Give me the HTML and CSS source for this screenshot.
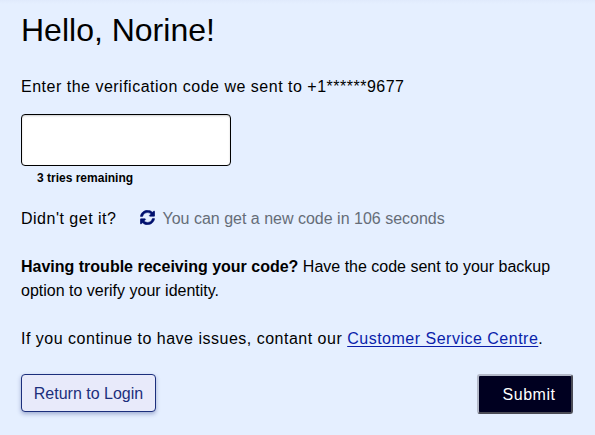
FILE: index.html
```html
<!DOCTYPE html>
<html lang="en">
<head>
  <meta charset="UTF-8">
  <meta name="viewport" content="width=device-width, initial-scale=1.0">
  <title>Verification Code</title>
  <link rel="stylesheet" href="styles.css">
</head>
<body>

  <form class="verify">
    <h1>Hello, Norine!</h1>

    <label class="code-label" for="code">Enter the verification code we sent to +1******9677</label>
    <input type="text" id="code" class="code-input" autocomplete="off">
    <p class="tries">3 tries remaining</p>

    <!-- Resend timer -->
    <div class="resend">
      <span class="question">Didn't get it?</span>
      <svg class="refresh" viewBox="0 0 512 512" aria-hidden="true">
        <path d="M370.7 133.3C339.5 104 298.900 88 255.800 88c-77.500.1-144.300 53.200-162.800 126.900-1.300 5.400-6.100 9.200-11.700 9.200H24.100c-7.500 0-13.200-6.800-11.800-14.200C33.900 94.900 134.800 8 256 8c66.400 0 126.800 26.100 171.300 68.700L463 41C478.100 25.900 504 36.600 504 57.900V192c0 13.300-10.700 24-24 24H345.900c-21.400 0-32.100-25.900-17-41l41.800-41.700zM32 296h134.100c21.400 0 32.100 25.900 17 41l-41.800 41.800c31.300 29.300 71.800 45.300 114.900 45.300 77.400-.1 144.300-53.100 162.800-126.800 1.300-5.400 6.100-9.200 11.700-9.200h57.300c7.500 0 13.200 6.800 11.800 14.200C478.100 417.100 377.200 504 256 504c-66.400 0-126.800-26.100-171.300-68.700L49 471c-15.100 15.100-41 4.400-41-16.900V320c0-13.300 10.700-24 24-24z"/>
      </svg>
      <span class="timer">You can get a new code in 106 seconds</span>
    </div>

    <p class="backup"><strong>Having trouble receiving your code?</strong> Have the code sent to your backup option to verify your identity.</p>
    <p class="support">If you continue to have issues, contant our <a href="#">Customer Service Centre</a>.</p>

    <div class="actions">
      <button type="button" class="button return">Return to Login</button>
      <button type="submit" class="button submit">Submit</button>
    </div>
  </form>

</body>
</html>
```
FILE: styles.css
```css
* {
  margin: 0;
  padding: 0;
  box-sizing: border-box;
  font-family: "Liberation Sans", Arial, sans-serif;
}

body {
  background: linear-gradient(#e0eafc, #e5efff 4px);
  background-color: #e5efff;
  color: #000;
  font-size: 16px;
  line-height: 24px;
  min-height: 100vh;
}

.verify {
  display: flex;
  flex-direction: column;
  padding: 10px 22px 0 21px;
}

h1 {
  font-size: 32px;
  font-weight: normal;
  line-height: 40px;
  margin-bottom: 25px;
}

.code-label {
  letter-spacing: 0.5px;
}

.code-input {
  width: 210px;
  height: 52px;
  margin-top: 15px;
  padding: 0 12px;
  background-color: #fff;
  border: 1px solid #000;
  border-radius: 4px;
  box-shadow: inset 0 1px 2px rgba(0, 0, 0, 0.2);
  font-size: 20px;
}

.tries {
  margin: 4px 0 21px 16px;
  font-size: 12px;
  font-weight: bold;
  line-height: 16px;
}

.resend {
  display: flex;
  align-items: center;
  margin-bottom: 24px;
}

.question {
  letter-spacing: 0.5px;
}

.refresh {
  width: 15px;
  height: 15px;
  margin: 0 7px 3px 24px;
  fill: #00106e;
  stroke: #00106e;
  stroke-width: 18;
}

.timer {
  color: #666d78;
}

.backup {
  margin-bottom: 24px;
}

.support {
  margin-bottom: 23px;
  letter-spacing: 0.5px;
}

.support a {
  color: #0a1eaa;
  text-underline-offset: 2px;
}

/* Buttons */
.actions {
  display: flex;
  justify-content: space-between;
}

.button {
  height: 38px;
  padding-top: 2px;
  font-size: 16px;
  cursor: pointer;
}

.return {
  width: 135px;
  background-color: #e8eafa;
  color: #1c2f7c;
  border: 1px solid #1c2f7c;
  border-radius: 4px;
  box-shadow: 0 2px 4px rgba(28, 47, 124, 0.35);
}

.submit {
  width: 96px;
  height: 40px;
  padding-left: 8px;
  background-color: #000020;
  color: #fff;
  border: 2px solid;
  border-color: #b4b9c8 #4b4b55 #4b4b55 #b4b9c8;
  border-radius: 3px;
  letter-spacing: 0.5px;
}
```
